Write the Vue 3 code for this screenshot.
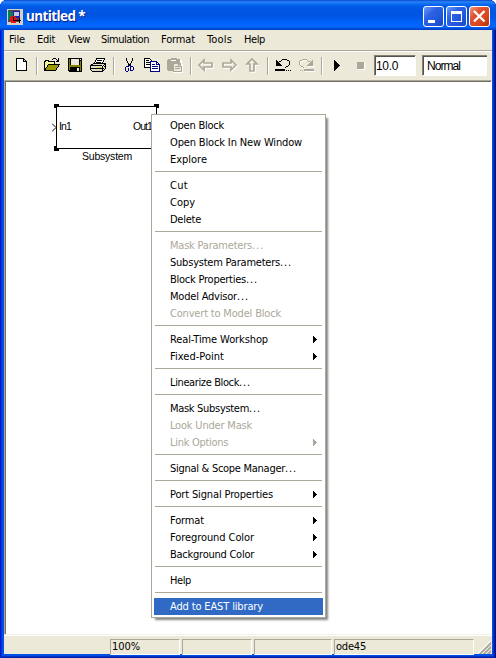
<script setup>
const menus = [
  ['File', 16], ['Edit', 18], ['View', 22], ['Simulation', 48], ['Format', 34], ['Tools', 25], ['Help', 21],
]

const groups = [
  [['Open Block', 54], ['Open Block In New Window', 132], ['Explore', 37]],
  [['Cut', 18], ['Copy', 25], ['Delete', 31]],
  [['Mask Parameters...', 94, 'off'], ['Subsystem Parameters...', 122], ['Block Properties...', 88], ['Model Advisor...', 79], ['Convert to Model Block', 111, 'off']],
  [['Real-Time Workshop', 98, 'sub'], ['Fixed-Point', 54, 'sub']],
  [['Linearize Block...', 81]],
  [['Mask Subsystem...', 91], ['Look Under Mask', 82, 'off'], ['Link Options', 58, 'off sub']],
  [['Signal & Scope Manager...', 127]],
  [['Port Signal Properties', 103, 'sub']],
  [['Format', 34, 'sub'], ['Foreground Color', 84, 'sub'], ['Background Color', 84, 'sub']],
  [['Help', 21]],
  [['Add to EAST library', 93, 'active']],
]

const DOTS = 12
const hasDots = (label) => label.endsWith('...')
const words = (label) => label.replace('...', '')

// Tracks a label so that it fills the given width in pixels.
const vFit = {
  mounted(el, { value }) {
    const natural = el.getBoundingClientRect().width
    el.style.letterSpacing = `${(value - natural) / el.textContent.length}px`
  },
}
</script>

<template>
  <div class="window">
    <header class="titlebar">
      <svg class="app-icon" width="16" height="16" viewBox="0 0 16 16" shape-rendering="crispEdges">
        <path fill="#d4d0c8" d="M0 0h16v16H0z" />
        <path fill="#4a4a58" d="M1 1h12v12H1z" />
        <path fill="#088050" d="M1 1l8 5-8 5z" />
        <path fill="#2020b0" d="M6 2h7v7H6z" />
        <path fill="#c8c8d8" d="M7 3h5v4H7z" />
        <path fill="#e81010" d="M4 7h4v1h1v1h1v4H9v1H4v-1H3V8h1z" />
        <path fill="none" stroke="#000" d="M6.500 8v3H9M9 11.500h5M12.500 9v5" />
      </svg>
      <h1 class="title"><span v-fit="59">untitled *</span></h1>
      <div class="controls">
        <button class="ctl"><svg width="21" height="21"><path fill="#fff" d="M5 14h7v3H5z" /></svg></button>
        <button class="ctl"><svg width="21" height="21"><path fill="#fff" fill-rule="evenodd" d="M5 5h11v11H5zM6 8v7h9V8z" /></svg></button>
        <button class="ctl close"><svg width="21" height="21"><path stroke="#fff" stroke-width="2.300" d="M5 5l10.500 10.500M15.500 5L5 15.500" /></svg></button>
      </div>
    </header>

    <div class="body">
      <nav class="menubar">
        <span v-for="[name, w] in menus" :key="name" v-fit="w">{{ name }}</span>
      </nav>

      <div class="toolbar">
        <svg class="tool"><path fill="#fff" stroke="#000" d="M6.500 6.500h7l3 3v9h-10zM13.500 6.500v3h3" /></svg>
        <i class="divider" />
        <svg class="tool">
          <path fill="#ffff9c" stroke="#000" d="M3.500 18.500v-9h1v-1h3v1h6v3" />
          <path fill="#9c9a00" stroke="#000" d="M3.500 18.500l4-6h11l-4 6z" />
          <path fill="none" stroke="#000" d="M11 7.500h1M12 6.500h3M15 7.500h1M16 8.500h2M17.500 6v4M15 9.500h3" />
        </svg>
        <svg class="tool">
          <path fill="#000" d="M4 6h14v14H5v-1H4z" />
          <path fill="#848200" d="M5 7h1v11H5zM16 9h1v10h-1zM5 13h12v1H5zM6 14h10v1H6z" />
          <path fill="#ece9d8" d="M7 7h8v6H7zM16 7h1v1h-1zM13 16h2v3h-2z" />
        </svg>
        <svg class="tool">
          <path fill="#fff" stroke="#000" d="M7.500 11.500l2-5h8l-2 5z" />
          <path fill="none" stroke="#000" d="M10 8.500h5M9 10.500h5" />
          <path fill="#dedbc8" stroke="#000" d="M3.500 13.500l3-2h12v5l-3 3h-10l-2-2z" />
          <path fill="none" stroke="#000" d="M3 13.500h12M15.500 14v5M16 13.500l3-2M4 16.500h11" />
          <path fill="#dede00" d="M11 15h3v1h-3z" />
          <path fill="#000" d="M17 14h1v1h-1zM16 16h1v1h-1z" />
        </svg>
        <i class="divider" />
        <svg class="tool">
          <path fill="#000" d="M8 6h1v3H8zM9 9h1v2H9zM10 11h1v2h-1zM14 6h1v3h-1zM13 9h1v2h-1zM12 11h1v2h-1zM11 12h1v2h-1z" />
          <path fill="none" stroke="#000084" d="M10.500 13v2M12.500 13v2M8 14.500h2M7.500 15v4M8 19.500h2M10.500 16v3M13 14.500h2M12.500 15v4M13 18.500h2M15.500 15v3" />
        </svg>
        <svg class="tool">
          <path fill="#fff" stroke="#000" d="M3.500 6.500h5l3 3v6h-8z" />
          <path fill="none" stroke="#000" d="M5 8.500h3M5 10.500h4M5 12.500h4" />
          <path fill="#fff" stroke="#000084" d="M9.500 9.500h6l3 3v7h-9zM15.500 9.500v3h3" />
          <path fill="none" stroke="#000084" d="M11 12.500h3M11 14.500h6M11 16.500h6" />
        </svg>
        <svg class="tool">
          <path fill="#fff" d="M5 8h13v4h1v9H9v-2H5z" />
          <path fill="#aca899" d="M4 7h3V6h6v1h3v4h1v8H4l-1-1V8z" />
          <path fill="#fff" d="M7 8h5v1H7z" />
          <path fill="#ece9d8" stroke="#aca899" d="M9.500 11.500h5l3 3v5h-8z" />
          <path fill="none" stroke="#aca899" d="M11 14.500h3M11 16.500h5M14.500 12v2h3" />
        </svg>
        <i class="divider" />
        <svg class="tool smooth">
          <path class="lit" d="M5 14l5-5v3h8v4h-8v3z" />
          <path class="dim" d="M4 13l5-5v3h8v4H9v3z" />
        </svg>
        <svg class="tool smooth">
          <path class="lit" d="M19 14l-5-5v3H6v4h8v3z" />
          <path class="dim" d="M18 13l-5-5v3H5v4h8v3z" />
        </svg>
        <svg class="tool smooth">
          <path class="lit" d="M12 8l5 5h-3v7h-4v-7H7z" />
          <path class="dim" d="M11 7l5 5h-3v7H9v-7H6z" />
        </svg>
        <i class="divider" />
        <svg class="tool">
          <path fill="#000" d="M4 8h1v1h1v1h1v1h1v1h1v1h1v1H4z" />
          <path fill="none" stroke="#000" d="M7 9.500h2M9 8.500h1M10 7.500h5M15 8.500h2M17.500 9v4M16.500 13v1M14 14.500h2M13 15.500h1" />
          <path fill="#000" d="M3 17h10v2H3zM14 18h1v1h-1zM16 18h1v1h-1zM18 18h1v1h-1z" />
        </svg>
        <svg class="tool">
          <g fill="none" stroke="#fff" transform="translate(1 1)"><path d="M15 9.500h-2M13 8.500h-1M12 7.500H7M7 8.500H5M4.500 9v4M5.500 13v1M8 14.500H6M9 15.500H8M12 13.500h7M9 18.500h10" /></g>
          <path fill="#aca899" d="M18 8h-1v1h-1v1h-1v1h-1v1h-1v1h-1v1h6z" />
          <path fill="none" stroke="#aca899" d="M15 9.500h-2M13 8.500h-1M12 7.500H7M7 8.500H5M4.500 9v4M5.500 13v1M8 14.500H6M9 15.500H8" />
          <path fill="#aca899" d="M9 17h10v2H9zM7 18h1v1H7zM5 18h1v1H5z" />
        </svg>
        <i class="divider" />
        <svg class="tool"><path fill="#000" d="M8 8h1v1h1v1h1v1h1v1h1v1h1v1h-1v1h-1v1h-1v1h-1v1H9v1H8z" /></svg>
        <svg class="tool"><path fill="#fff" d="M9 11h7v7H9z" /><path fill="#aca899" d="M8 10h7v7H8z" /></svg>
        <div class="field time"><span v-fit="22">10.0</span></div>
        <div class="field mode"><span v-fit="33">Normal</span></div>
      </div>

      <main class="canvas">
        <svg class="block" width="110" height="50" shape-rendering="crispEdges">
          <path fill="#fff" stroke="#000" d="M4.500 3.500h100v42H4.500z" />
          <path fill="#000" d="M2 1h5v2H5v2H2zM102 1h5v4h-3V3h-2zM2 43h3v2h2v3H2zM102 45h2v-2h3v5h-5z" />
          <path fill="#fff" d="M5 4h1v1H5zM103 4h1v1h-1zM5 44h1v1H5z" />
          <path fill="none" stroke="#000" shape-rendering="auto" d="M0 20.500l4 4-4 4" />
        </svg>
        <span class="port in"><span v-fit="12">In1</span></span>
        <span class="port out"><span v-fit="19">Out1</span></span>
        <span class="caption"><span v-fit="50">Subsystem</span></span>
      </main>

      <footer class="status">
        <div class="pane zoom"><span v-fit="28">100%</span></div>
        <div class="pane a" />
        <div class="pane b" />
        <div class="pane solver"><span v-fit="30">ode45</span></div>
        <svg class="grip" width="13" height="13">
          <path stroke="#fff" stroke-width="1.500" d="M0 13L13 0M4 13l9-9M8 13l5-5" />
          <path stroke="#aca899" stroke-width="2" d="M1.500 13.500l12-12M5.500 13.500l8-8M9.500 13.500l4-4" />
        </svg>
      </footer>
    </div>

    <div class="context">
      <ul v-for="(group, g) in groups" :key="g" class="group">
        <li v-for="[label, w, kind] in group" :key="label" class="item" :class="kind">
          <span v-fit="hasDots(label) ? w - DOTS : w">{{ words(label) }}</span>
          <span v-if="hasDots(label)" v-fit="DOTS">...</span>
          <svg v-if="kind && kind.includes('sub')" class="arrow" width="4" height="7"><path d="M0 0h1v1h1v1h1v1h1v1H3v1H2v1H1v1H0z" /></svg>
        </li>
      </ul>
    </div>
  </div>
</template>

<style>
body { margin: 0; background: #fff; }
</style>

<style scoped>
* { box-sizing: border-box; }
.window {
  position: relative;
  width: 496px;
  height: 658px;
  display: flex;
  flex-direction: column;
  padding: 0 4px 4px;
  overflow: hidden;
  border-radius: 7px 7px 0 0;
  background: #0050e8;
  box-shadow: inset 1px 0 #0019cf, inset 2px 0 #0831d9, inset -1px 0 #00138c, inset -2px -1px #001ea0, inset -3px -2px #0435c8;
  font: 11px/17px "DejaVu Sans Condensed", "DejaVu Sans", sans-serif;
  font-stretch: condensed;
  color: #000;
}
.window span { white-space: nowrap; }
.titlebar {
  height: 30px;
  flex: none;
  display: flex;
  align-items: flex-start;
  margin: 0 -4px;
  padding: 6px 6px 0 7px;
  background: linear-gradient(#0a4ad0 0, #2a86f8 2px, #1876f4 3px, #0464ee 5px, #0058e4 8px, #0054e0 15px, #005cf0 20px, #0066ff 25px, #0064fa 27px, #0048d0 29px, #003cc0 30px);
}
.app-icon { margin: 3px 3px 0 0; }
.title {
  flex: 1;
  margin: 0;
  font: bold 13.500px/21px "Open Sans", "Noto Sans", sans-serif;
  font-stretch: normal;
  color: #fff;
  text-shadow: 1px 1px #0a1883;
}
.controls { display: flex; gap: 2px; }
.ctl {
  width: 21px;
  height: 21px;
  padding: 0;
  border: 1px solid #fff;
  border-radius: 3px;
  background: linear-gradient(135deg, #6c9cf8, #2c62e4 35%, #2458dc 65%, #1848c4);
}
.ctl svg { display: block; margin: -1px; }
.ctl.close { background: linear-gradient(135deg, #f09878, #e05030 35%, #dc4820 65%, #b83008); }
.body { flex: 1; display: flex; flex-direction: column; background: #ece9d8; }
.menubar {
  height: 22px;
  display: flex;
  gap: 12px;
  padding: 1px 5px 0;
  border-bottom: 1px solid #fff;
  box-shadow: inset 0 -1px #aca899;
}
.menubar span:nth-child(2) { margin-right: 1px; }
.menubar span:nth-child(3) { margin-right: -1px; }
.menubar span { flex: none; }
.toolbar { height: 28px; display: flex; padding-left: 6px; }
.tool { width: 23px; height: 28px; flex: none; shape-rendering: crispEdges; }
.smooth { shape-rendering: auto; }
.lit { fill: none; stroke: #fff; stroke-width: 1.500; }
.dim { fill: none; stroke: #aca899; stroke-width: 1.700; }
.divider {
  width: 2px;
  height: 18px;
  margin: 5px 3px 0;
  background: linear-gradient(90deg, #aca899 50%, #fff 50%);
}
.field {
  height: 21px;
  margin-top: 3px;
  padding-left: 1px;
  border: 1px solid;
  border-color: #848278 #fff #fff #848278;
  box-shadow: inset 1px 1px #55524a;
  background: #fff;
  font: 12px/20px "Liberation Sans", Arial, sans-serif;
}
.time { width: 42px; margin-left: 2px; }
.mode { width: 65px; margin-left: 6px; padding-left: 4px; border-right: 0; }
.canvas {
  position: relative;
  flex: 1;
  border: 1px solid #aca899;
  border-right-color: #fff;
  border-bottom-color: #f4f2e8;
  box-shadow: inset 1px 1px #716f64;
  background: #fff;
}
.block { position: absolute; left: 47px; top: 22px; }
.port, .caption { position: absolute; font: 10.500px/12px "Liberation Sans", Arial, sans-serif; }
.in { left: 54px; top: 39px; }
.out { left: 128px; top: 39px; }
.caption { left: 77px; top: 69px; }
.status {
  height: 19px;
  display: flex;
  padding: 3px 0 0 106px;
  border-top: 1px solid #fff;
}
.pane {
  height: 16px;
  padding-left: 1px;
  border: 1px solid;
  border-color: #aca899 #fff #fff #aca899;
  line-height: 14px;
}
.zoom { width: 70px; margin-right: 2px; }
.a { width: 70px; margin-right: 2px; }
.b { width: 78px; margin-right: 2px; }
.solver { width: 140px; }
.grip { margin: 2px 1px 0 auto; }
.context {
  position: absolute;
  left: 151px;
  top: 114px;
  width: 175px;
  padding: 2px;
  border: 1px solid #aca899;
  background: #fff;
  box-shadow: 3px 3px 2px -1px #858585;
}
.group { margin: 0; padding: 0; list-style: none; }
.group + .group::before {
  content: "";
  display: block;
  height: 1px;
  margin: 3px 1px 5px;
  background: #aca899;
}
.item {
  height: 17px;
  display: flex;
  align-items: center;
  padding: 0 6px 0 16px;
}
.item span { flex: none; }
.off { color: #aca899; }
.active { background: #316ac5; color: #fff; }
.arrow { margin-left: auto; fill: currentColor; shape-rendering: crispEdges; }
</style>
